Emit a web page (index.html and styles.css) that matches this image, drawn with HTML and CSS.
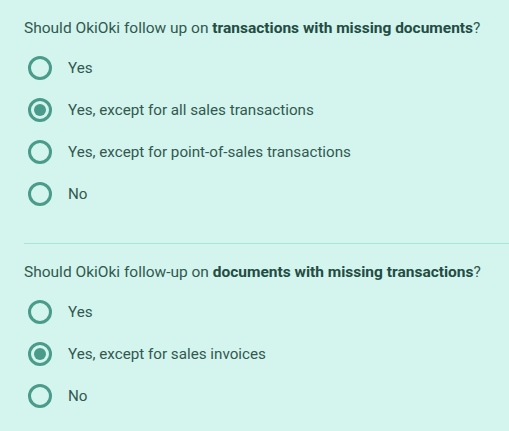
FILE: index.html
```html
<!DOCTYPE html>
<html>
<head>
<meta charset="utf-8">
<link rel="stylesheet" href="styles.css">
</head>
<body>
<div class="page">
  <section class="group first">
    <p class="question">Should OkiOki follow up on <strong>transactions with missing documents</strong>?</p>
    <div class="options">
      <label class="option"><span class="radio"></span><span class="label">Yes</span></label>
      <label class="option"><span class="radio checked"></span><span class="label">Yes, except for all sales transactions</span></label>
      <label class="option"><span class="radio"></span><span class="label">Yes, except for point-of-sales transactions</span></label>
      <label class="option"><span class="radio"></span><span class="label">No</span></label>
    </div>
  </section>
  <hr class="divider">
  <section class="group second">
    <p class="question">Should OkiOki follow-up on <strong>documents with missing transactions</strong>?</p>
    <div class="options">
      <label class="option"><span class="radio"></span><span class="label">Yes</span></label>
      <label class="option"><span class="radio checked"></span><span class="label">Yes, except for sales invoices</span></label>
      <label class="option"><span class="radio"></span><span class="label">No</span></label>
    </div>
  </section>
</div>
</body>
</html>
```
FILE: styles.css
```css
html, body {
  margin: 0;
  padding: 0;
  background: #d4f4ee;
}
body {
  font-family: Roboto, "Noto Sans", sans-serif;
  font-size: 15px;
  color: #31594f;
  width: 509px;
  height: 431px;
  overflow: hidden;
}
.page {
  padding-left: 24px;
}
.group.first {
  padding-top: 17px;
}
.group.second {
  padding-top: 17px;
}
.question {
  margin: 0 0 8px 0;
  line-height: 22px;
  font-size: 15.5px;
}
.question strong {
  font-weight: 700;
  color: #234c43;
}
.options {
  display: flex;
  flex-direction: column;
}
.option {
  display: flex;
  align-items: center;
  height: 42px;
  padding-left: 4px;
  gap: 16px;
}
.radio {
  box-sizing: border-box;
  width: 24px;
  height: 24px;
  border: 3px solid #4a9b8a;
  border-radius: 50%;
  display: flex;
  align-items: center;
  justify-content: center;
  flex: none;
}
.radio.checked::after {
  content: "";
  width: 12px;
  height: 12px;
  border-radius: 50%;
  background: #4a9b8a;
}
.label {
  line-height: 22px;
  font-size: 15.2px;
}
.divider {
  border: none;
  border-top: 1px solid #a9e4d8;
  margin: 28px 0 0 0;
  height: 0;
}
```
